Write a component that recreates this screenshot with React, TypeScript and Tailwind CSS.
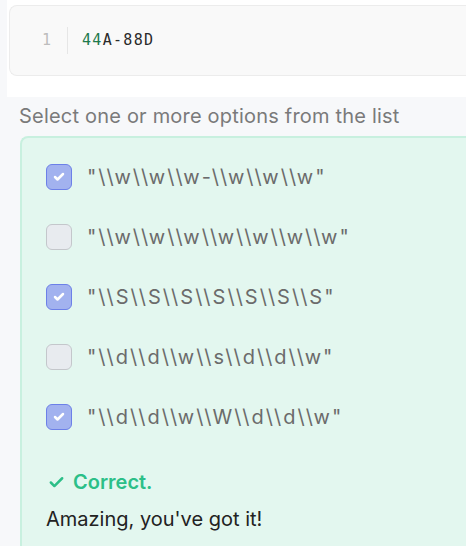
import { Check } from 'lucide-react'

const options = [
  { label: '"\\\\w\\\\w\\\\w-\\\\w\\\\w\\\\w"', checked: true },
  { label: '"\\\\w\\\\w\\\\w\\\\w\\\\w\\\\w\\\\w"', checked: false },
  { label: '"\\\\S\\\\S\\\\S\\\\S\\\\S\\\\S\\\\S"', checked: true },
  { label: '"\\\\d\\\\d\\\\w\\\\s\\\\d\\\\d\\\\w"', checked: false },
  { label: '"\\\\d\\\\d\\\\w\\\\W\\\\d\\\\d\\\\w"', checked: true },
]

export default function App() {
  return (
    <div className="h-[546px] w-[466px] overflow-hidden bg-[#f7f8fa] font-['Inter',sans-serif]">
      {/* Code block */}
      <div className="ml-[7px] h-[97px] bg-white pt-[5px] pl-[2px]">
        <div className="flex h-[71px] items-center rounded-l-lg border border-r-0 border-[#ececec] bg-[#f9f9f9]">
          <span className="w-[57px] pl-[32px] font-['DejaVu_Sans_Mono',monospace] text-[15px] text-[#bdbdbd]">1</span>
          <div className="h-[27px] w-px bg-[#e6e6e6]" />
          <span className="pl-[14px] font-['DejaVu_Sans_Mono',monospace] text-[15px] tracking-[1.3px] text-[#2b2b2b]">
            <span className="text-[#1f7a4d]">44</span>A-88D
          </span>
        </div>
      </div>

      {/* Question */}
      <p className="mt-[7px] pl-[19px] text-[20px] leading-6 tracking-[0.2px] text-[#7a7a7a]">
        Select one or more options from the list
      </p>

      <div className="mt-[8px] ml-[20px] rounded-l-lg border-2 border-r-0 border-[#c8f0df] bg-[#e3f7ef] pl-[24px] pt-[26px]">
        <div className="flex flex-col gap-[34px]">
          {options.map(o => (
            <div key={o.label} className="flex h-[26px] items-center gap-[15px]">
              {o.checked ? (
                <span className="flex h-[26px] w-[26px] items-center justify-center rounded-[6px] border border-[#6c80e8] bg-[#a2b2ef]">
                  <Check className="h-[12px] w-[12px] text-white" strokeWidth={5} />
                </span>
              ) : (
                <span className="h-[26px] w-[26px] rounded-[6px] border border-[#c4c7cb] bg-[#e8ebef]" />
              )}
              <span className="text-[20px] tracking-[2px] text-[#6b6b6b]">{o.label}</span>
            </div>
          ))}
        </div>

        <div className="mt-[37px] flex items-center gap-[8px] pl-[2px] text-[20px] font-semibold text-[#2cbf88]">
          <Check className="h-[17px] w-[17px]" strokeWidth={3.5} />
          Correct.
        </div>
        <p className="mt-[7px] pb-[20px] text-[20px] text-[#222]">Amazing, you've got it!</p>
      </div>
    </div>
  )
}
